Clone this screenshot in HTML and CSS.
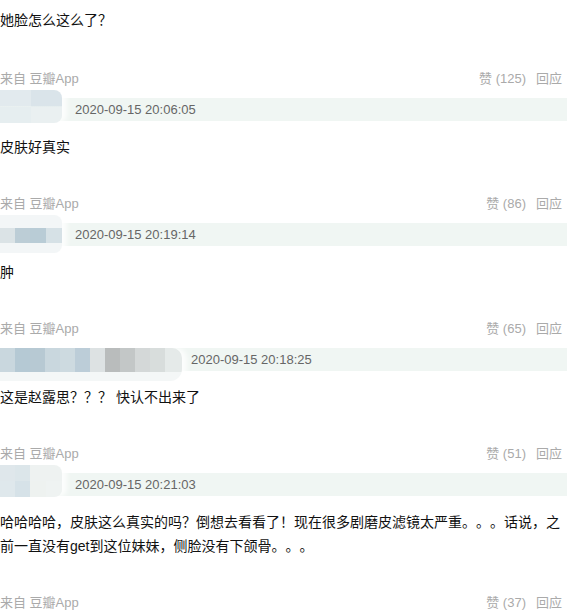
FILE: index.html
```html
<!DOCTYPE html>
<html lang="zh-CN">
<head>
    <meta charset="UTF-8">
    <meta name="viewport" content="width=device-width, initial-scale=1.0">
    <title>豆瓣 评论</title>
    <link rel="stylesheet" href="styles.css">
</head>
<body>
    <div class="comment-list">
        <p class="comment-text first">她脸怎么这么了？</p>
        <div class="meta">
            <span class="from">来自 豆瓣App</span>
            <span class="actions"><span>赞 (125)</span><span>回应</span></span>
        </div>

        <div class="comment">
            <div class="author">
                <span class="name name-short"><span class="mosaic mosaic-1"></span></span>
                <span class="time">2020-09-15 20:06:05</span>
            </div>
            <p class="comment-text">皮肤好真实</p>
            <div class="meta">
                <span class="from">来自 豆瓣App</span>
                <span class="actions"><span>赞 (86)</span><span>回应</span></span>
            </div>
        </div>

        <div class="comment">
            <div class="author">
                <span class="name name-short"><span class="mosaic mosaic-2"></span></span>
                <span class="time">2020-09-15 20:19:14</span>
            </div>
            <p class="comment-text">肿</p>
            <div class="meta">
                <span class="from">来自 豆瓣App</span>
                <span class="actions"><span>赞 (65)</span><span>回应</span></span>
            </div>
        </div>

        <div class="comment">
            <div class="author">
                <span class="name name-long"><span class="mosaic mosaic-3"></span></span>
                <span class="time">2020-09-15 20:18:25</span>
            </div>
            <p class="comment-text">这是赵露思？？？ 快认不出来了</p>
            <div class="meta">
                <span class="from">来自 豆瓣App</span>
                <span class="actions"><span>赞 (51)</span><span>回应</span></span>
            </div>
        </div>

        <div class="comment">
            <div class="author">
                <span class="name name-short"><span class="mosaic mosaic-4"></span></span>
                <span class="time">2020-09-15 20:21:03</span>
            </div>
            <p class="comment-text">哈哈哈哈，皮肤这么真实的吗？倒想去看看了！现在很多剧磨皮滤镜太严重。。。话说，之前一直没有get到这位妹妹，侧脸没有下颌骨。。。</p>
            <div class="meta">
                <span class="from">来自 豆瓣App</span>
                <span class="actions"><span>赞 (37)</span><span>回应</span></span>
            </div>
        </div>
    </div>
</body>
</html>
```

FILE: styles.css
```css
body {
    margin: 0;
    font-family: "Liberation Sans", "Noto Sans CJK SC", sans-serif;
    background: #fff;
    text-spacing-trim: space-all;
}
.comment-list {
    width: 567px;
    overflow: hidden;
}
.comment-text {
    margin: 0;
    font-size: 14px;
    line-height: 24px;
    color: #111;
}
.comment-text.first {
    margin-top: 8px;
    margin-bottom: 37px;
}
.meta {
    display: flex;
    justify-content: space-between;
    height: 20px;
    line-height: 20px;
    padding-right: 5px;
    font-size: 13px;
    color: #aaa;
}
.comment .meta {
    margin-top: 35px;
}
.actions {
    display: flex;
    gap: 10px;
}
.author {
    position: relative;
    display: flex;
    height: 23px;
    line-height: 23px;
    margin-top: 9px;
    margin-bottom: 14px;
    background: #f0f6f3;
    font-size: 13px;
    color: #666;
}
.name {
    flex: none;
    margin-right: 13px;
}
.name-short {
    width: 62px;
}
.name-long {
    width: 178px;
}

/* blurred user names */
.mosaic {
    position: absolute;
    left: 0;
    border-radius: 0 8px 8px 0;
    box-shadow: 5px 0 5px rgba(255, 255, 255, 0.8);
}
.mosaic-1 {
    top: -8px;
    width: 62px;
    height: 33px;
    background:
        linear-gradient(to right, #e2eaee 0 31px, #dae4ea 31px) top / 100% 50% no-repeat,
        linear-gradient(to right, #e6eef0 0 31px, #eaf0f1 31px) bottom / 100% 50% no-repeat;
}
.mosaic-2 {
    top: -8px;
    width: 62px;
    height: 38px;
    background:
        linear-gradient(to right, #dbe3e6 0 15px, #bccdd6 15px 30px, #b9ccd6 30px 46px, #d6e1e6 46px) 0 13px / 100% 15px no-repeat,
        #f3f6f7;
}
.mosaic-3 {
    top: 0;
    width: 182px;
    height: 33px;
    border-radius: 0 10px 12px 0;
    background:
        linear-gradient(to right, #c9d7de 0 15px, #b5c9d4 15px 30px, #b7c9d3 30px 45px, #c9d7de 45px 60px,
            #cddae0 60px 75px, #bccdd8 75px 90px, #dde2e3 90px 105px, #b9bcbc 105px 120px,
            #c3c7c7 120px 135px, #d4d8d8 135px 150px, #d8dddc 150px 165px, #e5eae9 165px) top / 100% 24px no-repeat,
        #f4f7f7;
}
.mosaic-4 {
    top: -8px;
    width: 62px;
    height: 32px;
    background:
        linear-gradient(to right, #dfe7eb 0 15px, #dce6ea 15px 30px, #eef2f1 30px) top / 100% 50% no-repeat,
        linear-gradient(to right, #dfe8ec 0 15px, #d6e2e8 15px 30px, #eef2f0 30px 46px, #eff3f2 46px) bottom / 100% 50% no-repeat;
}
.time {
    white-space: nowrap;
}
```
